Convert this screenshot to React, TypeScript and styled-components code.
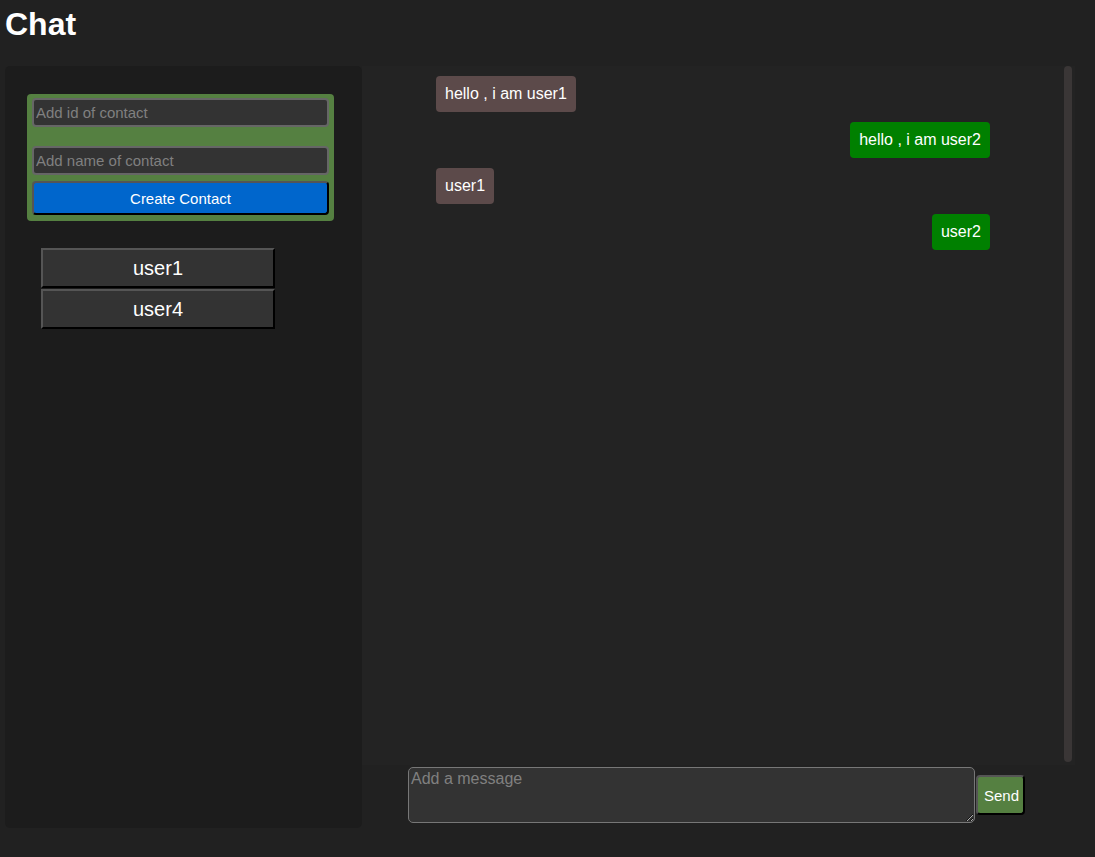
import styled, { createGlobalStyle } from 'styled-components';

const GlobalStyle = createGlobalStyle`
	html, body {
		margin: 0;
		background: #212121;
		font-family: 'Liberation Sans', Arial, sans-serif;
		color: #fff;
	}
`;

interface Message {
	text: string;
	mine: boolean;
}

const messages: Message[] = [
	{ text: 'hello , i am user1', mine: false },
	{ text: 'hello , i am user2', mine: true },
	{ text: 'user1', mine: false },
	{ text: 'user2', mine: true },
];

const contacts = ['user1', 'user4'];

export default function App() {
	return (
		<Page>
			<GlobalStyle />
			<Title>Chat</Title>
			<Layout>
				<Sidebar>
					<ContactForm>
						<Field placeholder="Add id of contact" />
						<Field placeholder="Add name of contact" $gap />
						<CreateButton>Create Contact</CreateButton>
					</ContactForm>
					<ContactList>
						{contacts.map((c) => (
							<ContactButton key={c}>{c}</ContactButton>
						))}
					</ContactList>
				</Sidebar>
				<ChatColumn>
					<MessageArea>
						<MessageList>
							{messages.map((m, i) => (
								<Bubble key={i} $mine={m.mine}>
									{m.text}
								</Bubble>
							))}
						</MessageList>
						<Scrollbar />
					</MessageArea>
					<Composer>
						<MessageInput placeholder="Add a message" />
						<SendButton>Send</SendButton>
					</Composer>
				</ChatColumn>
			</Layout>
		</Page>
	);
}

const Page = styled.div`
	padding: 0 5px;
`;

const Title = styled.h1`
	margin: 0;
	padding: 6px 0 0;
	height: 66px;
	box-sizing: border-box;
	font-size: 32px;
	font-weight: bold;
	line-height: 37px;
`;

const Layout = styled.div`
	display: flex;
	align-items: flex-start;
`;

const Sidebar = styled.div`
	width: 357px;
	height: 762px;
	box-sizing: border-box;
	background: #1c1c1c;
	border-radius: 5px;
	padding: 28px 0 0 22px;
`;

const ContactForm = styled.div`
	width: 307px;
	box-sizing: border-box;
	background: #558041;
	border-radius: 4px;
	padding: 4px 5px 6px;
	display: flex;
	flex-direction: column;
`;

const Field = styled.input<{ $gap?: boolean }>`
	height: 29px;
	box-sizing: border-box;
	margin-top: ${(p) => (p.$gap ? '19px' : '0')};
	background: #333;
	border: 2px solid #666;
	border-radius: 4px;
	padding: 0 2px;
	font-family: 'Liberation Sans', Arial, sans-serif;
	font-size: 15px;
	color: #fff;

	&::placeholder {
		color: #808080;
	}
`;

const CreateButton = styled.button`
	margin-top: 6px;
	height: 34px;
	background: #0066cc;
	color: #fff;
	border: 2px solid;
	border-color: #555 #000 #000 #555;
	border-radius: 4px;
	font-family: 'Liberation Sans', Arial, sans-serif;
	font-size: 15px;
`;

const ContactList = styled.div`
	margin: 27px 0 0 14px;
	display: flex;
	flex-direction: column;
	gap: 1px;
`;

const ContactButton = styled.button`
	width: 234px;
	height: 40px;
	box-sizing: border-box;
	background: #333;
	color: #fff;
	border: 2px solid;
	border-color: #555 #000 #000 #555;
	font-family: 'Liberation Sans', Arial, sans-serif;
	font-size: 20px;
`;

const ChatColumn = styled.div`
	width: 713px;
	display: flex;
	flex-direction: column;
`;

const MessageArea = styled.div`
	height: 699px;
	background: #232323;
	display: flex;
	padding-right: 3px;
`;

const MessageList = styled.div`
	flex: 1;
	padding: 10px 74px 0 74px;
	display: flex;
	flex-direction: column;
	gap: 10px;
`;

const Bubble = styled.div<{ $mine: boolean }>`
	align-self: ${(p) => (p.$mine ? 'flex-end' : 'flex-start')};
	background: ${(p) => (p.$mine ? '#008000' : '#5c4a4a')};
	border-radius: 4px;
	padding: 9px 9px;
	font-size: 16px;
	line-height: 18px;
`;

const Scrollbar = styled.div`
	width: 8px;
	height: 696px;
	background: #3a3636;
	border-radius: 4px;
`;

const Composer = styled.div`
	display: flex;
	align-items: center;
	padding: 2px 0 0 46px;
`;

const MessageInput = styled.textarea`
	width: 567px;
	height: 56px;
	box-sizing: border-box;
	background: #333;
	border: 1px solid #777;
	border-radius: 5px;
	padding: 2px;
	font-family: 'Liberation Sans', Arial, sans-serif;
	font-size: 16px;
	color: #fff;
	resize: both;

	&::placeholder {
		color: #808080;
	}
`;

const SendButton = styled.button`
	margin-left: 1px;
	width: 49px;
	height: 40px;
	box-sizing: border-box;
	background: #558041;
	color: #fff;
	border: 2px solid;
	border-color: #555 #000 #000 #555;
	border-radius: 4px;
	font-family: 'Liberation Sans', Arial, sans-serif;
	font-size: 15px;
`;
